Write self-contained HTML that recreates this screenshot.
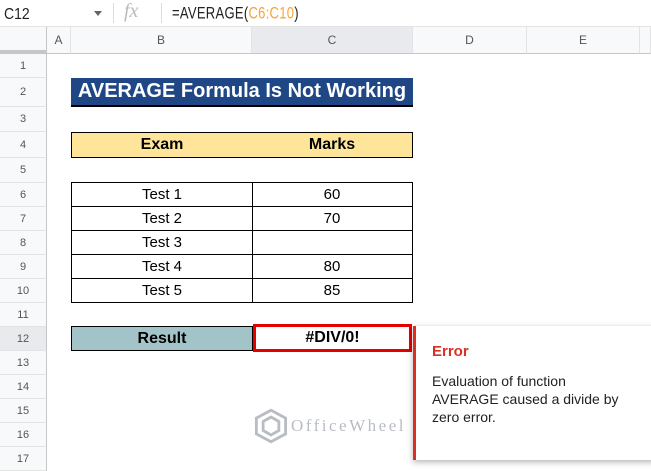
<!DOCTYPE html>
<html><head><style>
*{box-sizing:border-box;margin:0;padding:0}
body{width:651px;height:465px;overflow:hidden;background:#fff;font-family:"Liberation Sans",Arial,sans-serif;position:relative}
.a{position:absolute}
.rh{position:absolute;left:0;width:47px;background:#f8f9fa;border-bottom:1px solid #e2e3e3;border-right:1px solid #c4c7c5;color:#555;font-size:11px;display:flex;align-items:center;justify-content:center}
.ch{position:absolute;top:27px;height:27px;background:#f8f9fa;border-right:1px solid #e2e3e3;border-bottom:1px solid #c4c7c5;color:#555;font-size:12px;display:flex;align-items:center;justify-content:center}
.c{position:absolute;display:flex;align-items:center;justify-content:center;font-size:15px;color:#000}
</style></head><body>
<div class="a" style="left:0;top:0;width:651px;height:27px;border-bottom:1px solid #e2e3e3"></div>
<div class="a" style="left:4px;top:4px;font-size:14px;color:#222;transform:scaleY(1.15);transform-origin:0 0">C12</div>
<div class="a" style="left:94px;top:11px;width:0;height:0;border-left:4px solid transparent;border-right:4px solid transparent;border-top:5px solid #666"></div>
<div class="a" style="left:113px;top:3px;width:1px;height:20px;background:#ddd"></div>
<div class="a" style="left:124px;top:0px;font-size:20px;font-style:italic;color:#bbb;font-family:'Liberation Serif',serif">fx</div>
<div class="a" style="left:161px;top:3px;width:1px;height:20px;background:#ddd"></div>
<div class="a" style="left:172px;top:3px;font-size:14px;color:#222;transform:scale(0.93,1.2);transform-origin:0 0;letter-spacing:0.3px">=AVERAGE(<span style="color:#f4a536">C6:C10</span>)</div>
<div class="a" style="left:0;top:27px;width:47px;height:27px;background:#f8f9fa;border-right:1px solid #c4c7c5;border-bottom:4px solid #c4c7c5"></div>
<div class="ch" style="left:47px;width:24px">A</div>
<div class="ch" style="left:71px;width:181px">B</div>
<div class="ch" style="left:252px;width:161px;background:#e8eaed">C</div>
<div class="ch" style="left:413px;width:114px">D</div>
<div class="ch" style="left:527px;width:113px">E</div>
<div class="ch" style="left:640px;width:11px"></div>
<div class="rh" style="top:54px;height:24px">1</div>
<div class="rh" style="top:78px;height:29px">2</div>
<div class="rh" style="top:107px;height:25px">3</div>
<div class="rh" style="top:132px;height:26px">4</div>
<div class="rh" style="top:158px;height:25px">5</div>
<div class="rh" style="top:183px;height:24px">6</div>
<div class="rh" style="top:207px;height:24px">7</div>
<div class="rh" style="top:231px;height:24px">8</div>
<div class="rh" style="top:255px;height:24px">9</div>
<div class="rh" style="top:279px;height:24px">10</div>
<div class="rh" style="top:303px;height:24px">11</div>
<div class="rh" style="top:327px;height:24px;background:#e8eaed">12</div>
<div class="rh" style="top:351px;height:24px">13</div>
<div class="rh" style="top:375px;height:24px">14</div>
<div class="rh" style="top:399px;height:24px">15</div>
<div class="rh" style="top:423px;height:24px">16</div>
<div class="rh" style="top:447px;height:24px">17</div>
<div class="c" style="left:71px;top:78px;width:342px;height:29px;background:#1f4785;border-bottom:2px solid #000;color:#fff;font-weight:bold;font-size:20px">AVERAGE Formula Is Not Working</div>
<div class="c" style="left:71px;top:132px;width:182px;height:26px;background:#ffe599;border:1px solid #000;font-weight:bold;font-size:16px">Exam</div>
<div class="c" style="left:252px;top:132px;width:161px;height:26px;background:#ffe599;border:1px solid #000;border-left:none;font-weight:bold;font-size:16px">Marks</div>
<div class="c" style="left:71px;top:182px;width:182px;height:25px;border:1px solid #000">Test 1</div>
<div class="c" style="left:252px;top:182px;width:161px;height:25px;border:1px solid #000;border-left:none">60</div>
<div class="c" style="left:71px;top:206px;width:182px;height:25px;border:1px solid #000">Test 2</div>
<div class="c" style="left:252px;top:206px;width:161px;height:25px;border:1px solid #000;border-left:none">70</div>
<div class="c" style="left:71px;top:230px;width:182px;height:25px;border:1px solid #000">Test 3</div>
<div class="c" style="left:252px;top:230px;width:161px;height:25px;border:1px solid #000;border-left:none"></div>
<div class="c" style="left:71px;top:254px;width:182px;height:25px;border:1px solid #000">Test 4</div>
<div class="c" style="left:252px;top:254px;width:161px;height:25px;border:1px solid #000;border-left:none">80</div>
<div class="c" style="left:71px;top:278px;width:182px;height:25px;border:1px solid #000">Test 5</div>
<div class="c" style="left:252px;top:278px;width:161px;height:25px;border:1px solid #000;border-left:none">85</div>
<div class="c" style="left:71px;top:326px;width:182px;height:25px;background:#a2c4c9;border:1px solid #000;font-weight:bold;font-size:16px">Result</div>
<div class="c" style="left:253px;top:324px;width:159px;height:28px;border:3px solid #e50000;font-weight:bold;font-size:16px">#DIV/0!</div>
<div class="a" style="left:413px;top:326px;width:245px;height:134px;background:#fff;border-left:3px solid #d93025;box-shadow:0 2px 6px rgba(0,0,0,.3)">
<div class="a" style="left:16px;top:17px;color:#d93025;font-size:15px;font-weight:bold">Error</div>
<div class="a" style="left:16px;top:46px;width:190px;color:#222;font-size:14px;line-height:18px">Evaluation of function AVERAGE caused a divide by zero error.</div>
</div>
<div class="a" style="left:253px;top:408px;width:36px;height:36px">
<svg width="36" height="36" viewBox="0 0 32 32" fill="none" stroke="#b8bcc4" stroke-width="2.5"><path d="M16 2L29 9V23L16 30L3 23V9Z"/><path d="M16 8L23 12V20L16 24L9 20V12Z"/></svg></div>
<div class="a" style="left:291px;top:416px;font-size:17px;letter-spacing:2.5px;color:#b8bcc4;font-family:'Liberation Serif',serif">OfficeWheel</div>
</body></html>
